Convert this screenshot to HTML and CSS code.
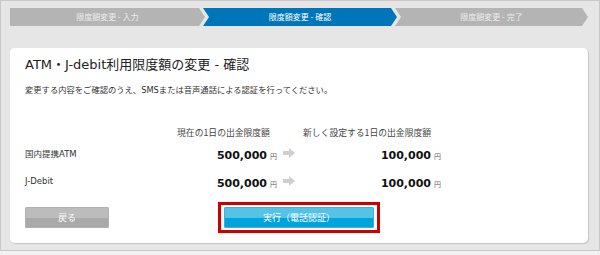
FILE: index.html
```html
<!DOCTYPE html>
<html lang="ja">
<head>
<meta charset="utf-8">
<title>限度額変更 - 確認</title>
<link rel="stylesheet" href="styles.css">
</head>
<body>
<div class="frame">
  <div class="steps">
    <div class="step step-first">限度額変更 - 入力</div>
    <div class="step step-active">限度額変更 - 確認</div>
    <div class="step step-last">限度額変更 - 完了</div>
  </div>
  <div class="card">
    <h1 class="title">ATM・J-debit利用限度額の変更 - 確認</h1>
    <p class="lead">変更する内容をご確認のうえ、SMSまたは音声通話による認証を行ってください。</p>
    <div class="limits">
      <div class="head"></div>
      <div class="head head-cur">現在の1日の出金限度額</div>
      <div class="head"></div>
      <div class="head head-new">新しく設定する1日の出金限度額</div>

      <div class="label">国内提携ATM</div>
      <div class="amount"><span class="num">500,000</span><span class="yen">円</span></div>
      <div class="arrow"><svg width="12" height="10" viewBox="0 0 12 10"><path d="M0 3H6V0L12 5L6 10V7H0Z" fill="#cfcfcf"/></svg></div>
      <div class="amount"><span class="num">100,000</span><span class="yen">円</span></div>

      <div class="label">J-Debit</div>
      <div class="amount"><span class="num">500,000</span><span class="yen">円</span></div>
      <div class="arrow"><svg width="12" height="10" viewBox="0 0 12 10"><path d="M0 3H6V0L12 5L6 10V7H0Z" fill="#cfcfcf"/></svg></div>
      <div class="amount"><span class="num">100,000</span><span class="yen">円</span></div>
    </div>
    <div class="actions">
      <button class="btn btn-back">戻る</button>
      <div class="highlight">
        <button class="btn btn-exec">実行（電話認証）</button>
      </div>
    </div>
  </div>
</div>
</body>
</html>
```
FILE: styles.css
```css
* { box-sizing: border-box; }
html, body { margin: 0; padding: 0; background: #f2f2f2; }
body { font-family: "DejaVu Sans", "Noto Sans CJK JP", sans-serif; color: #333; }

.frame {
  width: 600px;
  height: 251px;
  border: 1px solid #c9c9c9;
  background: #e6e6e6;
  padding: 7px 11px 0 9px;
}

.steps { display: flex; height: 18px; }
.step {
  height: 18px;
  line-height: 18px;
  font-size: 8px;
  text-align: center;
  color: #ececec;
  background: #b4b4b4;
  font-family: "Noto Sans CJK JP", sans-serif;
}
.step-first {
  width: 195px;
  clip-path: polygon(0 0, calc(100% - 6px) 0, 100% 50%, calc(100% - 6px) 100%, 0 100%);
}
.step-active {
  width: 194px;
  margin-left: -2px;
  background: #0076ba;
  color: #fff;
  clip-path: polygon(0 0, calc(100% - 6px) 0, 100% 50%, calc(100% - 6px) 100%, 0 100%, 6px 50%);
}
.step-last {
  width: 193px;
  margin-left: -2px;
  clip-path: polygon(0 0, calc(100% - 6px) 0, 100% 50%, calc(100% - 6px) 100%, 0 100%, 6px 50%);
}

.card {
  margin-top: 22px;
  width: 578px;
  height: 195px;
  background: #fff;
  border-radius: 5px;
  box-shadow: 1px 1px 1px #c4c4c4;
  padding: 8px 15px 0 15px;
}

.title {
  margin: 0;
  font-size: 13px;
  font-weight: normal;
  line-height: 18px;
  color: #222;
}
.lead {
  margin: 10px 0 0 0;
  font-size: 8.3px;
  line-height: 12px;
  color: #333;
}

.limits {
  margin-top: 30px;
  display: grid;
  grid-template-columns: 145px 107px 24px 140px;
  grid-template-rows: 13px 28px 28px;
  align-items: center;
}
.head {
  font-size: 8.8px;
  line-height: 13px;
  color: #444;
  font-family: "Noto Sans CJK JP", sans-serif;
}
.head-cur { text-align: center; }
.head-new { padding-left: 2px; }
.label {
  font-size: 8.5px;
  color: #333;
}
.amount { text-align: right; white-space: nowrap; }
.num {
  font-size: 11px;
  font-weight: bold;
  color: #111;
}
.yen {
  font-size: 7px;
  color: #666;
  margin-left: 3px;
  font-family: "Noto Sans CJK JP", sans-serif;
}
.arrow { display: flex; justify-content: center; align-items: center; }
.arrow svg { display: block; }

.actions {
  margin-top: 7px;
  display: flex;
  align-items: center;
}
.btn {
  border: 0;
  padding: 0;
  height: 21px;
  border-radius: 2px;
  font-size: 9px;
  color: #fff;
  font-family: "Noto Sans CJK JP", sans-serif;
  cursor: pointer;
}
.btn-back {
  width: 84px;
  background: linear-gradient(#bcbcbc 0, #bcbcbc 50%, #a9a9a9 50%, #a9a9a9 100%);
  box-shadow: inset 0 0 0 1px #b0b0b0;
}
.highlight {
  margin-left: 109px;
  border: 3px solid #cc0000;
  padding: 1px 3px;
  height: 31px;
  width: 162px;
  display: flex;
  align-items: center;
}
.btn-exec {
  width: 150px;
  background: linear-gradient(#55c3e6 0, #55c3e6 50%, #00a3dc 50%, #00a3dc 100%);
  box-shadow: inset 0 0 0 1px #3ab4de;
}
```
